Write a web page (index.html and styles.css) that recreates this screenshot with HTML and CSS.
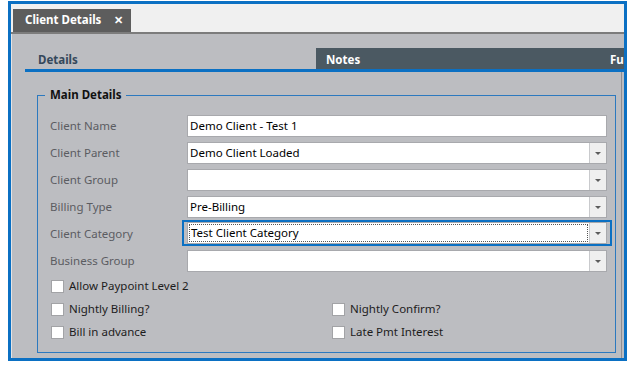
FILE: index.html
```html
<!DOCTYPE html>
<html>
  <head>
    <meta charset="UTF-8" />
    <title>Client Details</title>
    <link rel="stylesheet" href="styles.css">
  </head>
  <body>
    <div class="window">
      <div class="doc-bar">
        <div class="doc-tab">
          <span>Client Details</span>
          <span class="close">&#x2715;</span>
        </div>
      </div>

      <div class="content">
        <div class="tabs">
          <div class="tab tab-details">Details</div>
          <div class="tab tab-dark tab-notes">Notes</div>
          <div class="tab tab-dark">Funding</div>
        </div>

        <div class="panel">
          <fieldset class="group">
            <legend>Main Details</legend>

            <div class="fields">
              <div class="row">
                <label>Client Name</label>
                <div class="input">Demo Client - Test 1</div>
              </div>
              <div class="row">
                <label>Client Parent</label>
                <div class="input combo">
                  <span class="text">Demo Client Loaded</span>
                  <span class="drop"><i></i></span>
                </div>
              </div>
              <div class="row">
                <label>Client Group</label>
                <div class="input combo">
                  <span class="text"></span>
                  <span class="drop"><i></i></span>
                </div>
              </div>
              <div class="row">
                <label>Billing Type</label>
                <div class="input combo">
                  <span class="text">Pre-Billing</span>
                  <span class="drop"><i></i></span>
                </div>
              </div>
              <div class="row">
                <label>Client Category</label>
                <div class="focus-ring">
                  <div class="input combo">
                    <span class="text"><span class="dotted">Test Client Category</span></span>
                    <span class="drop"><i></i></span>
                  </div>
                </div>
              </div>
              <div class="row">
                <label>Business Group</label>
                <div class="input combo">
                  <span class="text"></span>
                  <span class="drop"><i></i></span>
                </div>
              </div>
            </div>

            <div class="checks">
              <div class="check full"><span class="box"></span>Allow Paypoint Level 2</div>
              <div class="check"><span class="box"></span>Nightly Billing?</div>
              <div class="check"><span class="box"></span>Nightly Confirm?</div>
              <div class="check"><span class="box"></span>Bill in advance</div>
              <div class="check"><span class="box"></span>Late Pmt Interest</div>
            </div>
          </fieldset>
        </div>
      </div>
    </div>
  </body>
</html>
```

FILE: styles.css
```css
* {
  box-sizing: border-box;
  margin: 0;
  padding: 0;
}

body {
  background-color: #fff;
  font-family: "Noto Sans", "Open Sans", sans-serif;
  font-size: 11.5px;
  line-height: 1.3;
}

.window {
  width: 619px;
  height: 360px;
  margin: 1px 0 0 8px;
  border: 3px solid #0b70c3;
  display: flex;
  flex-direction: column;
  background-color: #bcbdc1;
}

/* document tab bar */
.doc-bar {
  height: 30px;
  background-color: #f0f0f0;
  border-bottom: 2px solid #7c7c7c;
  display: flex;
  align-items: flex-end;
  padding-left: 2px;
}

.doc-tab {
  width: 118px;
  height: 23px;
  background-color: #5d5d5d;
  color: #fff;
  font-weight: bold;
  display: flex;
  align-items: center;
  padding-left: 12px;
  gap: 13px;
}

.close {
  font-size: 11px;
  font-weight: bold;
}

/* page content */
.content {
  flex: 1;
  display: flex;
  flex-direction: column;
  padding: 14px 0 0 13px;
  border-left: 1px solid #e4e4e6;
}

.tabs {
  display: flex;
  height: 24px;
  border-bottom: 3px solid #0b70c3;
  overflow: hidden;
  font-weight: bold;
}

.tab {
  flex-shrink: 0;
  display: flex;
  align-items: center;
  padding-top: 3px;
  padding-left: 10px;
  white-space: nowrap;
}

.tab-details {
  width: 291px;
  padding-left: 13px;
  color: #34485b;
}

.tab-dark {
  background-color: #4b5962;
  color: #fff;
}

.tab-notes {
  width: 284px;
}

.panel {
  flex: 1;
  padding: 16px 5px 5px 12px;
  margin-right: 2px;
  border-right: 1px solid #8e8f93;
}

.group {
  height: 100%;
  border: 1px solid #2c79bf;
  padding: 0;
}

.group legend {
  margin-left: 7px;
  padding: 0 5px;
  font-weight: bold;
  color: #111;
  line-height: 14px;
}

.fields {
  padding: 13px 8px 0 12px;
  display: flex;
  flex-direction: column;
  gap: 5px;
}

.row {
  display: flex;
  align-items: center;
  height: 22px;
}

.row label {
  width: 137px;
  color: #5b5c61;
  padding-top: 1px;
}

.input {
  flex: 1;
  height: 22px;
  background-color: #fff;
  border: 1px solid #a8a9ad;
  padding-left: 2px;
  display: flex;
  align-items: center;
  color: #000;
}

.combo {
  padding-left: 0;
  align-items: stretch;
}

.combo .text {
  flex: 1;
  display: flex;
  align-items: center;
  padding-left: 2px;
  border-right: 1px solid #c9cacd;
}

.drop {
  width: 16px;
  background-color: #efefef;
  display: flex;
  align-items: center;
  justify-content: center;
}

.drop i {
  width: 0;
  height: 0;
  border-left: 3px solid transparent;
  border-right: 3px solid transparent;
  border-top: 3px solid #5c5c5c;
}

.focus-ring {
  flex: 1;
  display: flex;
  border: 2px solid #0b70c3;
  padding: 0 3px;
  margin: -3px -5px -1px -5px;
}

.dotted {
  flex: 1;
  align-self: stretch;
  display: flex;
  align-items: center;
  border: 1px dotted #555;
  margin: 1px 1px 1px -1px;
  padding-left: 1px;
}

/* checkboxes */
.checks {
  display: grid;
  grid-template-columns: 281px 1fr;
  row-gap: 5px;
  margin-top: 5px;
  padding-left: 12px;
}

.check {
  display: flex;
  align-items: center;
  gap: 5px;
  height: 18px;
  padding-left: 1px;
  color: #1c1c1c;
}

.check.full {
  grid-column: 1 / -1;
}

.box {
  width: 13px;
  height: 13px;
  background-color: #fff;
  border: 1px solid #a2a3a6;
}
```
